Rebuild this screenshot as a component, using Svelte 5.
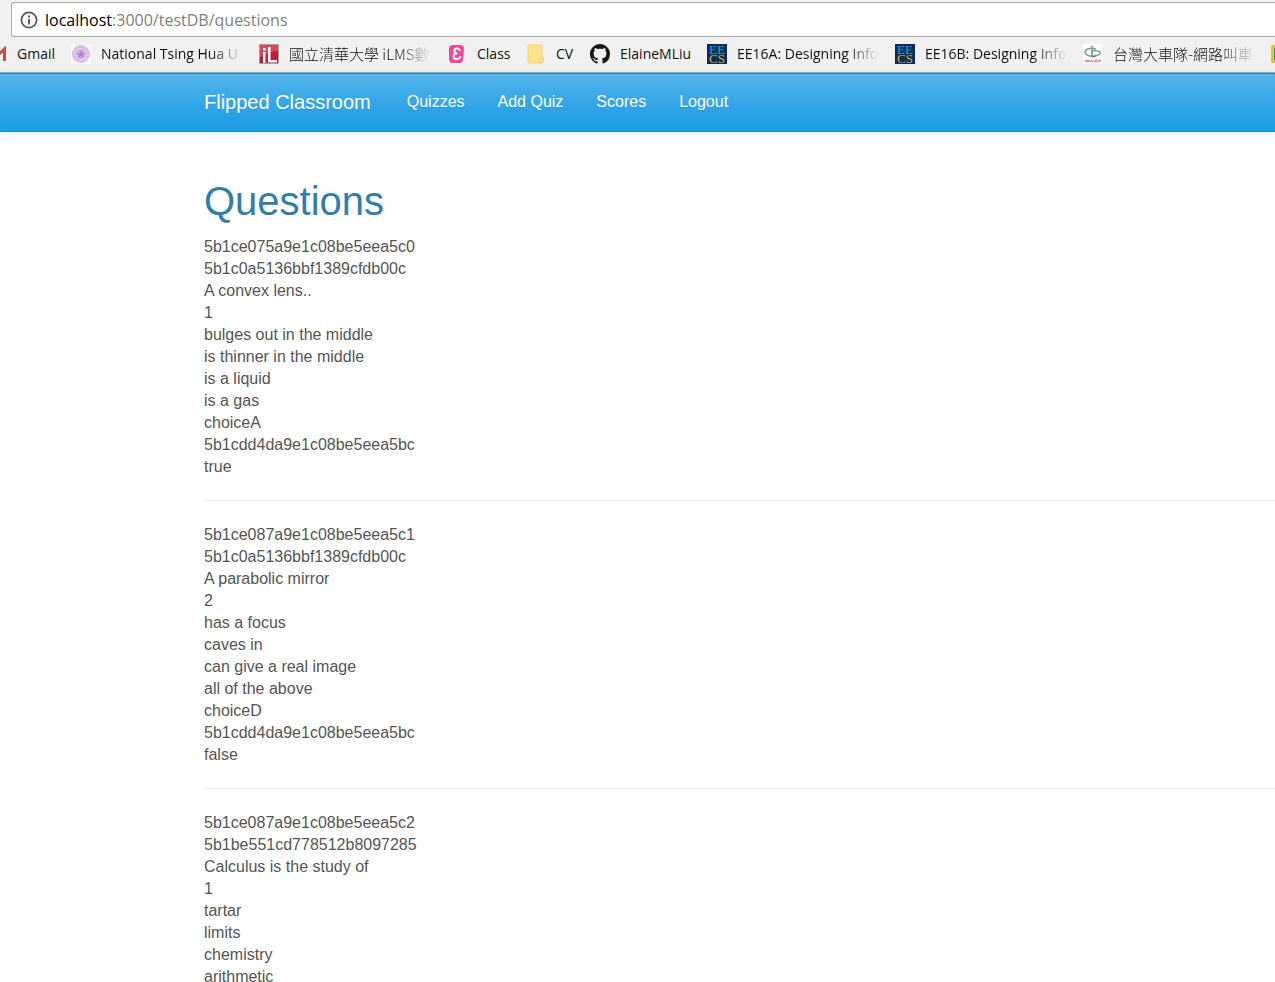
<script>
  const bookmarks = [
    { icon: 'gmail', label: 'Gmail', width: 38 },
    { icon: 'seal', label: 'National Tsing Hua U', width: 142, fade: true },
    { icon: 'ilms', label: '國立清華大學 iLMS數', width: 142, fade: true, cjk: true },
    { icon: 'class', label: 'Class', width: 33 },
    { icon: 'folder', label: 'CV', width: 18 },
    { icon: 'github', label: 'ElaineMLiu', width: 71 },
    { icon: 'eecs', label: 'EE16A: Designing Info', width: 142, fade: true },
    { icon: 'eecs', label: 'EE16B: Designing Info', width: 142, fade: true },
    { icon: 'taxi', label: '台灣大車隊-網路叫車', width: 142, fade: true, cjk: true },
    { icon: 'last', label: '', width: 0 }
  ];

  const links = ['Quizzes', 'Add Quiz', 'Scores', 'Logout'];

  const questions = [
    [
      '5b1ce075a9e1c08be5eea5c0',
      '5b1c0a5136bbf1389cfdb00c',
      'A convex lens..',
      '1',
      'bulges out in the middle',
      'is thinner in the middle',
      'is a liquid',
      'is a gas',
      'choiceA',
      '5b1cdd4da9e1c08be5eea5bc',
      'true'
    ],
    [
      '5b1ce087a9e1c08be5eea5c1',
      '5b1c0a5136bbf1389cfdb00c',
      'A parabolic mirror',
      '2',
      'has a focus',
      'caves in',
      'can give a real image',
      'all of the above',
      'choiceD',
      '5b1cdd4da9e1c08be5eea5bc',
      'false'
    ],
    [
      '5b1ce087a9e1c08be5eea5c2',
      '5b1be551cd778512b8097285',
      'Calculus is the study of',
      '1',
      'tartar',
      'limits',
      'chemistry',
      'arithmetic'
    ]
  ];
</script>

<div class="window">
  <header class="browser">
    <div class="address">
      <svg width="18" height="18" viewBox="0 0 18 18" aria-hidden="true">
        <circle cx="9" cy="9" r="7.6" fill="none" stroke="#5a5a5a" stroke-width="1.8" />
        <path d="M8 4.5h2v2H8zM8 8h2v5.5H8z" fill="#5a5a5a" />
      </svg>
      <div class="url"><span class="host">localhost</span>:3000/testDB/questions</div>
    </div>
    <nav class="bookmarks" aria-label="Bookmarks">
      {#each bookmarks as mark}
        <a href="#top" class="bookmark" class:cjk={mark.cjk} aria-label={mark.label || 'Bookmark'}>
          <svg width="20" height="20" viewBox="0 0 20 20" aria-hidden="true">
            {#if mark.icon === 'gmail'}
              <path d="M2 4h16v13H2z" fill="#f4f4f4" />
              <path d="M2 17V5l8 7 7.500-7v12" fill="none" stroke="#db4437" stroke-width="3" />
            {:else if mark.icon === 'seal'}
              <path d="M0 0h20v20H0z" fill="#fbf8fb" />
              <circle cx="10" cy="10" r="8.500" fill="#ecdcf1" stroke="#d5b7df" stroke-width="1" />
              <circle cx="10" cy="10" r="6.800" fill="none" stroke="#c9a0d6" stroke-width="1.800" stroke-dasharray="1.2 .8" />
              <circle cx="10" cy="10" r="4.300" fill="#dabbe4" stroke="#c294d1" />
              <path d="m10 6 1.200 2.700 2.800.3-2.100 1.900.6 2.800L10 12.300l-2.500 1.400.6-2.800L6 9l2.800-.3z" fill="#b57fc9" />
            {:else if mark.icon === 'ilms'}
              <path d="M.5.500h19v19H.5z" fill="#c31836" stroke="#a5a0a0" />
              <path d="M1 1h18v6Q9 8 1 13z" fill="#d34a60" />
              <path d="M4 4h2.500v2.500H4zM4 8h2.500v11H4zM9 3h2.500v13H18v2.500H9z" fill="#fff" />
            {:else if mark.icon === 'class'}
              <path d="M6 1h7q4 0 4 4l-1 10q0 4-4 4H6q-4 0-4-4V5q0-4 4-4" fill="#ff3f9b" />
              <path d="M13 7q-1-3-3.500-2.500-2.500.5-2 3 .5 2 3 2-4 0-4 3 .5 3 3.500 2.500 3-.5 3.500-3" fill="none" stroke="#fff" stroke-width="2" />
            {:else if mark.icon === 'folder'}
              <path d="M3 1h12q1 0 1 1v10l1 2v4l-2 1H3q-1 0-1-1V2q0-1 1-1" fill="#ffe38b" stroke="#f3cf6b" />
              <path d="M14 19v-4l2-2 1 1v4l-1 1z" fill="#ffe9a4" stroke="#edc55c" />
            {:else if mark.icon === 'github'}
              <g transform="scale(1.250)">
                <path fill="#191717" d="M8 0C3.580 0 0 3.580 0 8c0 3.540 2.290 6.530 5.470 7.590.4.070.55-.17.55-.38 0-.19-.01-.82-.01-1.490-2.010.37-2.530-.49-2.690-.94-.09-.23-.48-.94-.82-1.130-.28-.15-.68-.52-.01-.53.63-.01 1.080.58 1.230.82.72 1.210 1.870.87 2.330.66.070-.52.28-.87.51-1.070-1.780-.2-3.640-.89-3.640-3.950 0-.87.31-1.590.82-2.150-.08-.2-.36-1.020.08-2.120 0 0 .67-.21 2.200.82.64-.18 1.320-.27 2-.27s1.360.09 2 .27c1.530-1.040 2.200-.82 2.200-.82.44 1.100.16 1.920.08 2.120.51.56.82 1.270.82 2.150 0 3.070-1.870 3.750-3.650 3.950.29.25.54.73.54 1.480 0 1.070-.01 1.930-.01 2.200 0 .21.15.46.55.38A8.010 8.010 0 0 0 16 8c0-4.420-3.580-8-8-8" />
              </g>
            {:else if mark.icon === 'eecs'}
              <path d="M0 0h20v20H0z" fill="#0b2b59" />
              <g font-family="Liberation Serif, serif" font-size="13" text-anchor="middle">
                <text x="10" y="10" fill="#1fa6de">EE</text>
                <text x="10" y="19" fill="#d9ab35">CS</text>
              </g>
            {:else if mark.icon === 'taxi'}
              <path d="M0 0h19v20H0z" fill="#fdfdfd" />
              <path d="M13 5Q3 3 2 8q1 5 10 4 6-1 5-4-2-2-7-1" fill="none" stroke="#79a09b" stroke-width="1.500" />
              <path d="M9 5v7q2 2 4-1" fill="none" stroke="#5f8f86" stroke-width="1.500" />
              <circle cx="9" cy="3" r="1.500" fill="#e79a82" />
              <path d="m2 16 1 2 1-2 1 2 1-2v2m2 0v-2l2 2v-2m2 0h2v2h-2zm4 2v-2h2l-2 2" fill="none" stroke="#d3798c" />
            {:else}
              <rect x="0" y="1" width="20" height="18" rx="2" fill="#fbbc1b" />
              <path d="M3 4h14v12H3z" fill="#2e9e5b" />
              <path d="m4 14 3-8 3 8z" fill="#d9eedf" />
            {/if}
          </svg>
          <span class="label" class:fade={mark.fade} style:width="{mark.width}px">{mark.label}</span>
        </a>
      {/each}
    </nav>
  </header>

  <nav class="navbar" id="top" aria-label="Main">
    <a class="brand" href="#top">Flipped Classroom</a>
    {#each links as link}
      <a class="link" href="#top">{link}</a>
    {/each}
  </nav>

  <main>
    <h1>Questions</h1>
    {#each questions as question, i}
      {#if i > 0}<hr />{/if}
      <section>
        {#each question as line}
          <div>{line}</div>
        {/each}
      </section>
    {/each}
  </main>
</div>

<style>
  :global(body) {
    margin: 0;
    background: #fff;
  }

  .window {
    height: 100vh;
    overflow: hidden;
    font: 16px/22px 'Liberation Sans', Arial, sans-serif;
    color: #555;
  }

  a {
    color: inherit;
    text-decoration: none;
  }

  .browser {
    padding-top: 2px;
    background: #f1f1f1;
    border-bottom: 1px solid #a9a9a9;
    font-family: 'Open Sans', 'Noto Sans CJK TC', sans-serif;
  }

  .address {
    display: flex;
    align-items: center;
    gap: 7px;
    height: 33px;
    margin-left: 11px;
    padding-left: 8px;
    background: #fff;
    border: 1px solid #a9a9a9;
    border-right: 0;
    border-radius: 3px 0 0 3px;
  }

  .url {
    font-size: 16px;
    color: #808080;
  }

  .host {
    color: #000;
  }

  .bookmarks {
    display: flex;
    gap: 16px;
    height: 33px;
    margin-left: -13px;
    padding-bottom: 2px;
    overflow: hidden;
  }

  .bookmark {
    display: flex;
    flex: none;
    align-items: center;
    gap: 10px;
    color: #111;
    font-size: 14px;
  }

  .cjk {
    font-family: 'Noto Sans CJK TC', sans-serif;
    font-size: 15px;
    font-weight: 300;
  }

  .bookmark svg {
    flex: none;
  }

  .label {
    white-space: nowrap;
  }

  .fade {
    mask-image: linear-gradient(to right, #000 calc(100% - 34px), transparent);
  }

  .navbar {
    display: flex;
    align-items: center;
    height: 55px;
    padding: 0 0 2px 16%;
    background: linear-gradient(#54b4eb, #2fa4e7 60%, #1d9ce5);
    border: solid #178acc;
    border-width: 1px 0;
    box-shadow: 0 1px 10px rgba(0, 0, 0, 0.1);
    color: #fff;
    text-shadow: 0 1px 0 rgba(0, 0, 0, 0.1);
  }

  .brand {
    margin-right: 19px;
    font-size: 20px;
  }

  .link {
    padding: 0 16px 0 17px;
  }

  main {
    padding: 45px 0 0 16%;
  }

  h1 {
    margin: 0 0 11px;
    font-size: 40px;
    font-weight: 400;
    line-height: 48px;
    color: #317eac;
  }

  hr {
    margin: 22px 0 23px;
    border: 0;
    border-top: 1px solid #eee;
  }
</style>
